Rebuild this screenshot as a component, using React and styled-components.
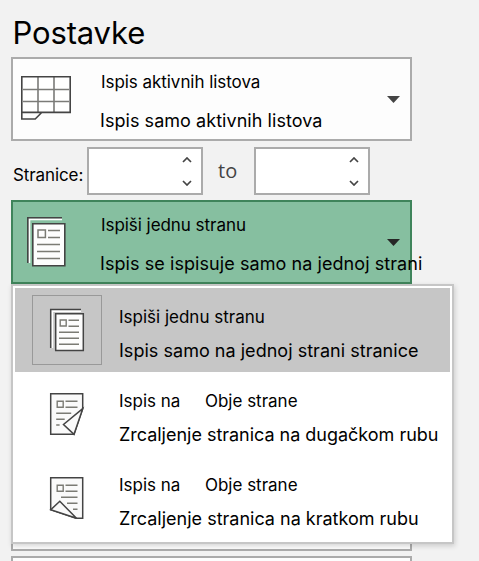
import React from 'react';
import styled, { createGlobalStyle } from 'styled-components';

const GlobalStyle = createGlobalStyle`
  * { box-sizing: border-box; }
  body {
    margin: 0;
    background: #f2f2f2;
    color: #000;
    font-family: Inter, "Liberation Sans", sans-serif;
    overflow: hidden;
  }
`;

const Page = styled.main`
  width: 479px;
  height: 561px;
  padding: 13px 0 0 11px;
  overflow: hidden;
`;

const Title = styled.h1`
  margin: 0 0 4px;
  padding-left: 1.5px;
  font-size: 31px;
  font-weight: 400;
  line-height: 40px;
  letter-spacing: -0.15px;
`;

const Stack = styled.div`
  display: flex;
  flex-direction: column;
  gap: 5px;
`;

const Card = styled.section`
  position: relative;
  display: flex;
  align-items: flex-start;
  flex: none;
  width: 401px;
  height: 84px;
  border: 2px solid ${(p) => (p.$active ? '#3f845b' : '#ababab')};
  background: ${(p) => (p.$active ? '#86bfa0' : '#fdfdfd')};
`;

const CardIcon = styled.svg`
  flex: none;
  width: 65px;
  height: 65px;
  margin: ${(p) => p.$top}px 0 0 2px;
`;

const Lines = styled.div`
  display: flex;
  flex-direction: column;
  gap: ${(p) => p.$gap}px;
  padding-top: ${(p) => p.$top}px;
  margin-left: ${(p) => p.$left}px;
  white-space: pre;
`;

const Name = styled.div`
  display: flex;
  gap: 24.5px;
  font-size: 17px;
  line-height: 24px;
  margin-left: ${(p) => p.$indent || 0}px;
  letter-spacing: ${(p) => p.$track || 0}px;
`;

const Detail = styled.div`
  font-size: 18px;
  line-height: 24px;
  letter-spacing: ${(p) => p.$track || 0}px;
`;

const Arrow = styled.svg`
  position: absolute;
  top: 37px;
  right: 10px;
  width: 13px;
  height: 7px;
  fill: ${(p) => (p.$dark ? '#262626' : '#444')};
`;

const PagesRow = styled.div`
  display: flex;
  align-items: center;
  height: 48px;
  margin: 6px 0 5px;
`;

const PagesLabel = styled.label`
  width: 76px;
  padding: 8px 0 0 2px;
  font-size: 17px;
  line-height: 24px;
  letter-spacing: -0.1px;
`;

const Spinner = styled.div`
  display: flex;
  flex-direction: column;
  justify-content: space-between;
  align-items: flex-end;
  width: 116px;
  height: 48px;
  padding: 8px 9px 7px 0;
  border: 2px solid #ababab;
  background: #fff;
`;

const Chevron = styled.svg`
  width: 10px;
  height: 6px;
  fill: none;
  stroke: #444;
  stroke-width: 1.7;
`;

const To = styled.span`
  width: 51px;
  padding-left: 15px;
  color: #444;
  font: 20px/28px "Open Sans", sans-serif;
`;

const Anchor = styled.div`
  position: relative;
`;

const Menu = styled.div`
  position: absolute;
  top: 84px;
  left: 0;
  z-index: 1;
  width: 443px;
  height: 260px;
  padding: 2px;
  border: 2px solid #c6c6c6;
  background: #fff;
  box-shadow: 1px 2px 5px rgba(0, 0, 0, 0.16);
`;

const MenuItem = styled.div`
  display: flex;
  align-items: flex-start;
  height: 84px;
  padding: 7px 0 0 17px;
  background: ${(p) => (p.$selected ? '#c6c6c6' : '#fff')};
`;

const IconFrame = styled.div`
  display: flex;
  flex: none;
  width: 70px;
  height: 70px;
  border: 1px solid ${(p) => (p.$selected ? '#999' : 'transparent')};
`;

const ItemIcon = styled.svg`
  width: 60px;
  height: 60px;
  margin: ${(p) => p.$top}px 0 0 7px;
`;

function DropArrow({ dark }) {
  return (
    <Arrow $dark={dark} viewBox="0 0 13 7">
      <path d="M0 0h13L6.5 7z" />
    </Arrow>
  );
}

function SheetIcon() {
  return (
    <CardIcon $top={6} viewBox="0 0 65 65" fill="none">
      <path d="M7 11.7h48v36H7z" fill="#fff" />
      <path d="M23 12v35M39 12v35M8 24.5h46M8 36.5h46" stroke="#7b7b78" strokeWidth="1.6" />
      <path d="M6.8 11.8h48.4v35.6H6.8zM6.8 47v7h13.4l7-7" stroke="#444" strokeWidth="1.6" />
    </CardIcon>
  );
}

function PagesIcon() {
  return (
    <CardIcon $top={8} viewBox="0 0 65 65" fill="none">
      <path d="M14.3 53V9.3H47" stroke="#fff" strokeWidth="2" />
      <path d="M12.8 53V7.8H47" stroke="#444" strokeWidth="1.6" />
      <path d="M17.8 13.8h32v42h-32z" fill="#fdfdfd" stroke="#444" strokeWidth="1.6" />
      <path
        d="M23 20h7.4v7.4H23zM33 20.4h12M33 27.4h12M22 34.4h23M22 41.4h23M22 48.4h23"
        stroke="#7b7b74"
        strokeWidth="1.5"
      />
    </CardIcon>
  );
}

function OneSideIcon() {
  return (
    <ItemIcon $top={4} viewBox="0 0 60 60" fill="none">
      <path d="M12.2 48V11H41" stroke="#fff" strokeWidth="2" />
      <path d="M10.7 48V9.6H41" stroke="#444" strokeWidth="1.5" />
      <path d="M15.7 13.8h27.6v36.6H15.7z" fill="#fdfdfd" stroke="#444" strokeWidth="1.5" />
      <path
        d="M20.2 20h6v6h-6zM28.5 20.3h10.5M28.5 26.3h10.5M19 32.3h20M19 38.3h20M19 44.3h20"
        stroke="#7b7b74"
        strokeWidth="1.4"
      />
    </ItemIcon>
  );
}

function LongEdgeIcon() {
  return (
    <ItemIcon $top={5} viewBox="0 0 60 60" fill="none">
      <path d="M10.7 8.7h32v15L34 49.3H10.7z" fill="#fafafa" stroke="#444" strokeWidth="1.5" />
      <path
        d="M17.2 16.3h6v6h-6zM25.5 16.3h12M25.5 22.3h12M16.2 28.3h15M16.2 34.3h8.5M16.2 40h3.4"
        stroke="#7b7b74"
        strokeWidth="1.4"
      />
      <path d="M42.7 23.7L23.5 39.5L34 49.3z" fill="#fafafa" stroke="#444" strokeWidth="1.5" />
    </ItemIcon>
  );
}

function ShortEdgeIcon() {
  return (
    <ItemIcon $top={6} viewBox="0 0 60 60" fill="none">
      <path d="M10.7 7.7h32v40.6h-6.5L10.7 39.8z" fill="#fafafa" stroke="#444" strokeWidth="1.5" />
      <path
        d="M17.2 15.3h6v6h-6zM25.5 15.3h12M25.5 21.3h12M21 27.3h16.5M27 33.3h10.5M33 39.3h4.5"
        stroke="#7b7b74"
        strokeWidth="1.4"
      />
      <path d="M10.7 39.8L19.8 31.3L36.5 48.3z" fill="#fafafa" stroke="#444" strokeWidth="1.5" />
    </ItemIcon>
  );
}

function NumberSpinner() {
  return (
    <Spinner>
      <Chevron viewBox="0 0 10 6">
        <path d="M1 5l4-4 4 4" />
      </Chevron>
      <Chevron viewBox="0 0 10 6">
        <path d="M1 1l4 4 4-4" />
      </Chevron>
    </Spinner>
  );
}

const sideOptions = [
  {
    name: ['Ispiši jednu stranu'],
    detail: 'Ispis samo na jednoj strani stranice',
    track: 0.03,
    Icon: OneSideIcon,
    selected: true,
  },
  {
    name: ['Ispis na', 'Obje strane'],
    detail: 'Zrcaljenje stranica na dugačkom rubu',
    track: -0.02,
    Icon: LongEdgeIcon,
  },
  {
    name: ['Ispis na', 'Obje strane'],
    detail: 'Zrcaljenje stranica na kratkom rubu',
    track: 0,
    Icon: ShortEdgeIcon,
  },
];

export default function App() {
  return (
    <Page>
      <GlobalStyle />
      <Title>Postavke</Title>
      <Card>
        <SheetIcon />
        <Lines $top={11} $gap={15} $left={20}>
          <Name $indent={1} $track={-0.05}>
            Ispis aktivnih listova
          </Name>
          <Detail $track={0.05}>Ispis samo aktivnih listova</Detail>
        </Lines>
        <DropArrow />
      </Card>
      <PagesRow>
        <PagesLabel>Stranice:</PagesLabel>
        <NumberSpinner />
        <To>to</To>
        <NumberSpinner />
      </PagesRow>
      <Anchor>
        <Stack>
          <Card $active>
            <PagesIcon />
            <DropArrow dark />
            <Lines $top={11} $gap={15} $left={20}>
              <Name $indent={1} $track={-0.05}>
                Ispiši jednu stranu
              </Name>
              <Detail $track={0.07}>Ispis se ispisuje samo na jednoj strani</Detail>
            </Lines>
          </Card>
          <Card />
          <Card />
          <Card />
          <Card />
        </Stack>
        <Menu>
          {sideOptions.map(({ name, detail, track, Icon, selected }) => (
            <MenuItem key={detail} $selected={selected}>
              <IconFrame $selected={selected}>
                <Icon />
              </IconFrame>
              <Lines $top={10} $gap={10} $left={17}>
                <Name>
                  {name.map((part) => (
                    <span key={part}>{part}</span>
                  ))}
                </Name>
                <Detail $track={track}>{detail}</Detail>
              </Lines>
            </MenuItem>
          ))}
        </Menu>
      </Anchor>
    </Page>
  );
}
